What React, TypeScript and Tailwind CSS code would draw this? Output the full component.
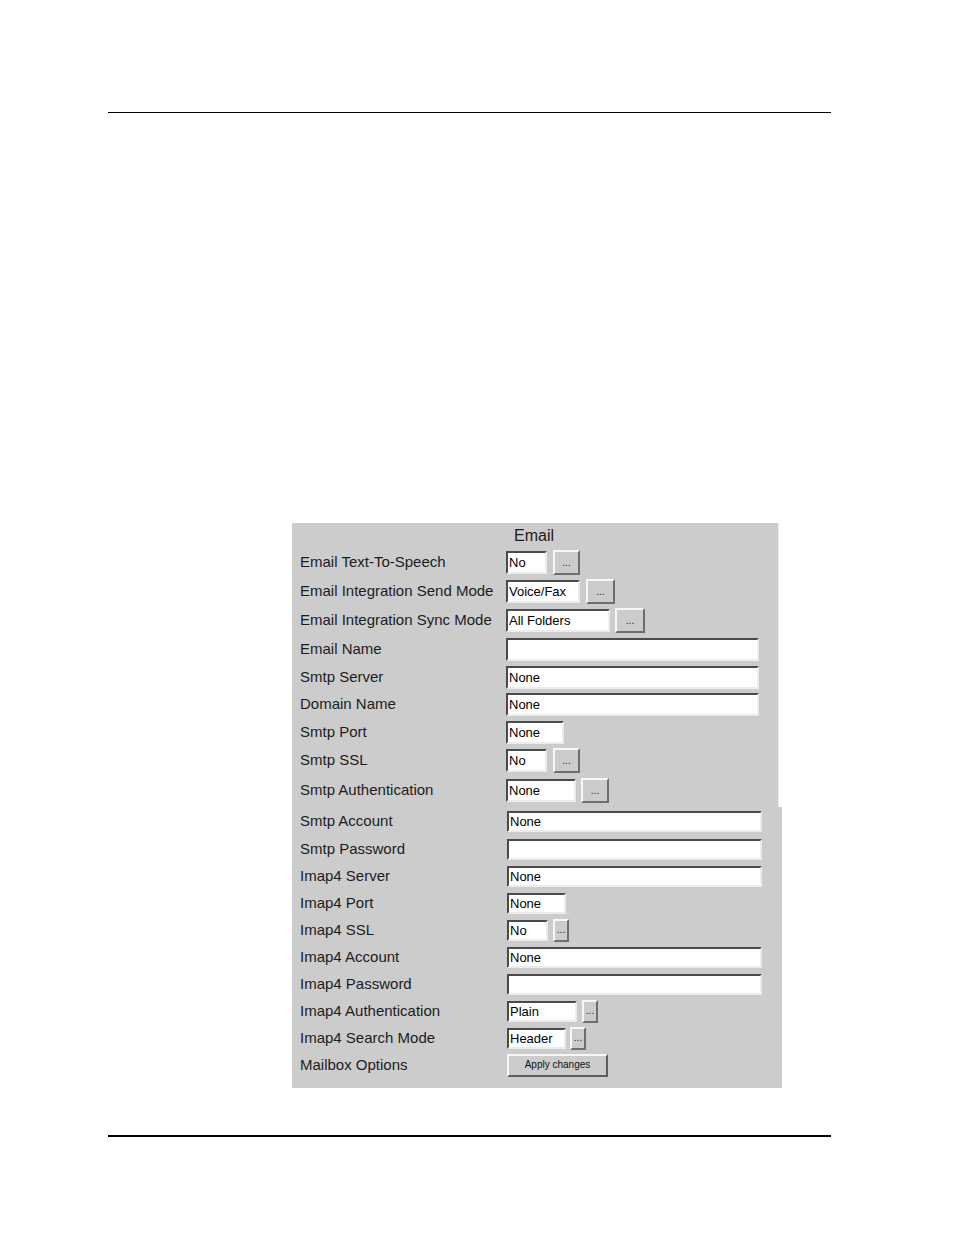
const font = { fontFamily: '"Liberation Sans", Arial, sans-serif' };

type Field = {
  label: string;
  value?: string;
  w: number;
  btn?: number;
  gap?: number;
  h: number;
};

const TOP: Field[] = [
  { label: "Email Text-To-Speech", value: "No", w: 41, btn: 27, gap: 6, h: 28 },
  { label: "Email Integration Send Mode", value: "Voice/Fax", w: 74, btn: 29, gap: 6, h: 30 },
  { label: "Email Integration Sync Mode", value: "All Folders", w: 104, btn: 30, gap: 5, h: 29 },
  { label: "Email Name", value: "", w: 253, h: 28 },
  { label: "Smtp Server", value: "None", w: 253, h: 28 },
  { label: "Domain Name", value: "None", w: 253, h: 27 },
  { label: "Smtp Port", value: "None", w: 58, h: 28 },
  { label: "Smtp SSL", value: "No", w: 41, btn: 27, gap: 6, h: 29 },
  { label: "Smtp Authentication", value: "None", w: 70, btn: 28, gap: 5, h: 30 },
];

const BOTTOM: Field[] = [
  { label: "Smtp Account", value: "None", w: 255, h: 28 },
  { label: "Smtp Password", value: "", w: 255, h: 28 },
  { label: "Imap4 Server", value: "None", w: 255, h: 27 },
  { label: "Imap4 Port", value: "None", w: 59, h: 27 },
  { label: "Imap4 SSL", value: "No", w: 41, btn: 16, gap: 5, h: 27 },
  { label: "Imap4 Account", value: "None", w: 255, h: 27 },
  { label: "Imap4 Password", value: "", w: 255, h: 27 },
  { label: "Imap4 Authentication", value: "Plain", w: 70, btn: 16, gap: 5, h: 27 },
  { label: "Imap4 Search Mode", value: "Header", w: 59, btn: 16, gap: 4, h: 27 },
];

function TextBox({ value, w, h }: { value?: string; w: number; h: number }) {
  return (
    <div
      className="flex items-center border-2 border-t-[#4a4a4a] border-l-[#4a4a4a] border-r-[#ececec] border-b-[#ececec] bg-white pl-[1px] text-[13px] leading-none text-black"
      style={{ width: w, height: h }}
    >
      {value}
    </div>
  );
}

function DotButton({ w, h }: { w: number; h: number }) {
  return (
    <div
      className="flex items-end justify-center border-2 border-t-[#f7f7f7] border-l-[#f7f7f7] border-r-[#6e6e6e] border-b-[#6e6e6e] bg-[#cccccc] pb-[5px] text-[10px] leading-none text-[#222]"
      style={{ width: w, height: h }}
    >
      ...
    </div>
  );
}

function Row({ f, boxH, btnH, left }: { f: Field; boxH: number; btnH: number; left: number }) {
  return (
    <div className="flex items-center" style={{ height: f.h }}>
      <div className="shrink-0 text-[15px] text-[#1c1c1c]" style={{ width: left }}>
        {f.label}
      </div>
      <TextBox value={f.value} w={f.w} h={boxH} />
      {f.btn ? (
        <div style={{ marginLeft: f.gap }}>
          <DotButton w={f.btn} h={btnH} />
        </div>
      ) : null}
    </div>
  );
}

export default function App() {
  return (
    <div className="relative h-[1235px] w-[954px] bg-white" style={font}>
      <div className="pt-[112px]">
        <div className="ml-[108px] h-px w-[723px] bg-black" />
      </div>

      <div className="ml-[292px] mt-[410px]">
        {/* upper block */}
        <div className="w-[487px] border-r border-[#ededed] bg-[#cccccc] pb-[2px] pl-[8px]">
          <div className="flex h-[25px] items-end justify-center pr-[10px] text-[16px] leading-none text-[#1c1c1c]">
            <span className="pb-[4px]">Email</span>
          </div>
          {TOP.map((f) => (
            <Row key={f.label} f={f} boxH={23} btnH={25} left={206} />
          ))}
        </div>

        {/* lower block */}
        <div className="w-[490px] bg-[#cccccc] pb-[10px] pl-[8px]">
          {BOTTOM.map((f) => (
            <Row key={f.label} f={f} boxH={21} btnH={23} left={207} />
          ))}
          <div className="flex h-[26px] items-center">
            <div className="w-[207px] shrink-0 text-[15px] text-[#1c1c1c]">Mailbox Options</div>
            <div className="flex h-[23px] w-[101px] items-center justify-center border-2 border-t-[#f7f7f7] border-l-[#f7f7f7] border-r-[#5e5e5e] border-b-[#5e5e5e] bg-[#cccccc] text-[10px] leading-none text-[#111]">
              Apply changes
            </div>
          </div>
        </div>
      </div>

      <div className="ml-[108px] mt-[47px] h-[2px] w-[723px] bg-black" />
    </div>
  );
}
